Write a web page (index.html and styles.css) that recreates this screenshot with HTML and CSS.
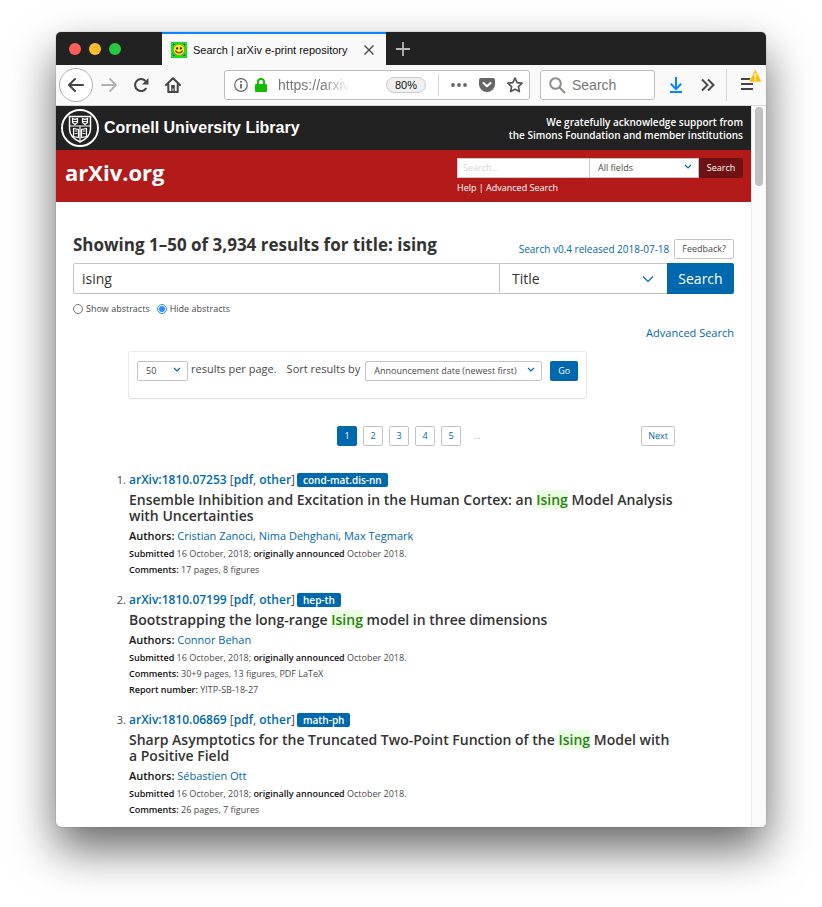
FILE: index.html
```
<!DOCTYPE html>
<html lang="en">
<head>
<meta charset="utf-8">
<title>Search | arXiv e-print repository</title>
<link rel="stylesheet" href="styles.css">
</head>
<body>
<div class="window">
  <div class="tabbar">
    <div class="lights"><span class="light close"></span><span class="light minimize"></span><span class="light expand"></span></div>
    <div class="tab">
      <svg class="favicon" viewBox="0 0 16 16" aria-hidden="true"><path fill="#0be81a" d="M0 0h16v16H0z"/><path stroke="#264b32" stroke-width="1.6" d="M1 1l14 14M15 1L1 15"/><path stroke="#b7c9b4" stroke-width="1.2" stroke-dasharray="1.5 1.5" d="M1 1l14 14M15 1L1 15"/><circle cx="8" cy="7.8" r="5.6" fill="#ffe51f" stroke="#a58a12" stroke-width=".7"/><ellipse cx="6.2" cy="6.2" rx=".8" ry="1.2"/><ellipse cx="9.8" cy="6.2" rx=".8" ry="1.2"/><path fill="none" stroke="#51370b" stroke-width="1.1" d="M4.3 8.7q3.7 4.6 7.4 0"/></svg>
      <span class="tab-title">Search | arXiv e-print repository</span>
      <button class="bare" type="button" aria-label="Close tab"><svg width="12" height="12" viewBox="0 0 12 12" fill="none" stroke="#4a4a4a" stroke-width="1.4"><path d="M1.5 1.5l9 9M10.5 1.5l-9 9"/></svg></button>
    </div>
    <button class="bare new-tab" type="button" aria-label="New tab"><svg width="14" height="14" viewBox="0 0 14 14" stroke="#b9b9b9" stroke-width="1.8"><path d="M7 0v14M0 7h14"/></svg></button>
  </div>

  <div class="toolbar">
    <button class="bare back" type="button" aria-label="Back"><svg width="16" height="16" viewBox="0 0 16 16" fill="none" stroke="#454545" stroke-width="2" stroke-linecap="round" stroke-linejoin="round"><path d="M15 8H1.5M7 2L1 8l6 6"/></svg></button>
    <button class="bare nav-icon" type="button" aria-label="Forward"><svg width="16" height="16" viewBox="0 0 16 16" fill="none" stroke="#b3b3b3" stroke-width="1.8" stroke-linecap="round" stroke-linejoin="round"><path d="M1 8h13.5M9 2l6 6-6 6"/></svg></button>
    <button class="bare nav-icon" type="button" aria-label="Reload"><svg width="16" height="16" viewBox="0 0 16 16" fill="none" stroke="#454545" stroke-width="2.1"><path d="M13.3 11A6 6 0 1 1 12.5 4"/><path fill="#454545" stroke="none" d="M15.5 1v6.5H9z"/></svg></button>
    <button class="bare nav-icon" type="button" aria-label="Home"><svg width="16" height="16" viewBox="0 0 16 16" fill="none" stroke="#454545" stroke-width="2" stroke-linejoin="round" stroke-linecap="round"><path d="M1 8l7-6.8L15 8M3.3 7.5V15h9.4V7.5"/><path fill="#454545" stroke="none" d="M6.2 8h3.6v6.5H8.5v-3h-1v3H6.2z"/></svg></button>
    <div class="urlbar">
      <svg width="14" height="14" viewBox="0 0 14 14" fill="none" stroke="#666" stroke-width="1.2"><circle cx="7" cy="7" r="6.3"/><path stroke-width="1.8" d="M7 6v4.5M7 3v1.8"/></svg>
      <svg width="12" height="14" viewBox="0 0 12 14"><path fill="#12bc00" d="M1 6h10a1 1 0 0 1 1 1v6a1 1 0 0 1-1 1H1a1 1 0 0 1-1-1V7a1 1 0 0 1 1-1z"/><path fill="none" stroke="#12bc00" stroke-width="2" d="M3 7V4a3 3 0 0 1 6 0v3"/></svg>
      <input class="url" type="text" aria-label="Address" value="https://arxiv.org">
      <button class="zoom-level" type="button">80%</button>
      <span class="url-divider"></span>
      <button class="bare" type="button" aria-label="Page actions"><svg width="16" height="16" viewBox="0 0 16 16" fill="#666"><circle cx="2" cy="8" r="1.9"/><circle cx="8" cy="8" r="1.9"/><circle cx="14" cy="8" r="1.9"/></svg></button>
      <button class="bare" type="button" aria-label="Save to Pocket"><svg width="16" height="16" viewBox="0 0 16 16"><path fill="#666" d="M2 1h12a2 2 0 0 1 2 2v4.500a8 7.500 0 0 1-16 0V3a2 2 0 0 1 2-2z"/><path fill="none" stroke="#fff" stroke-width="2" stroke-linecap="round" stroke-linejoin="round" d="M4.500 6L8 9.300 11.500 6"/></svg></button>
      <button class="bare" type="button" aria-label="Bookmark"><svg width="16" height="16" viewBox="0 0 16 16" fill="none" stroke="#555" stroke-width="1.7" stroke-linejoin="round"><path d="M8 1l2.100 4.600 5 .6-3.700 3.400 1 5L8 12.200l-4.400 2.400 1-5L.9 6.200l5-.6z"/></svg></button>
    </div>
    <div class="searchbar">
      <svg width="17" height="17" viewBox="0 0 17 17" fill="none" stroke="#8c8c8c" stroke-width="2"><circle cx="6.5" cy="6.5" r="5.3"/><path d="M10.5 10.5l5.5 5.5"/></svg>
      <input type="text" aria-label="Web search" placeholder="Search">
    </div>
    <div class="tools">
      <button class="bare" type="button" aria-label="Downloads"><svg width="14" height="16" viewBox="0 0 14 16" fill="none" stroke="#0a84ff" stroke-width="2"><path d="M7 0v11.500M1.800 6.800L7 12l5.200-5.200M1 15h12"/></svg></button>
      <button class="bare" type="button" aria-label="More tools"><svg width="14" height="14" viewBox="0 0 14 14" fill="none" stroke="#4a4a4a" stroke-width="2"><path d="M1 1.500L6.500 7 1 12.500M7 1.500L12.500 7 7 12.500"/></svg></button>
    </div>
    <button class="bare menu" type="button" aria-label="Menu"><svg width="22" height="24" viewBox="0 0 22 24"><path stroke="#454545" stroke-width="2" d="M1 10h12M1 15h12M1 20h12"/><path fill="#ffbf00" stroke="#f9f9fa" stroke-width=".6" stroke-linejoin="round" d="M14.500 1.500q.8-1.200 1.600 0l5 10q.5 1.500-1 1.500h-9.500q-1.500 0-1-1.500z"/><path stroke="#fff" stroke-width="1.700" d="M15.300 4.500v4M15.300 9.800v1.600"/></svg></button>
  </div>

  <div class="viewport">
    <div class="page">
      <header>
        <div class="cornell">
          <a class="brand" href="#">
            <svg width="38" height="38" viewBox="0 0 38 38" fill="none" stroke="#fff"><circle cx="19" cy="19" r="18" stroke-width="1.9"/><path stroke-width="1.5" d="M8.500 7.500h21V20q0 8-10.500 13Q8.500 28 8.500 20z"/><path stroke-width="1.2" d="M8.500 17h21M11.500 9.500v4l2.500 2 2.500-2v-4l-2.500 1zM21.500 9.500v4l2.500 2 2.500-2v-4l-2.500 1zM19 17v15M12.500 19.500l5 1v8l-5-1zM25.500 19.500l-5 1v8l5-1z"/><path stroke-width=".9" d="M13.500 22h3M13.500 24.500h3M21.500 22h3M21.500 24.500h3M12 12.500h4M22 12.500h4"/></svg>
            <span>Cornell University Library</span>
          </a>
          <p class="support">We gratefully acknowledge support from<br>the Simons Foundation and member institutions</p>
        </div>
        <div class="identity">
          <a class="site-name" href="#">arXiv.org</a>
          <form class="mini-search">
            <div class="mini-row">
              <input type="text" aria-label="Search terms" placeholder="Search...">
              <span class="select mini-select"><select aria-label="Field to search"><option>All fields</option></select><svg width="8" height="6" viewBox="0 0 8 6"><path d="M1 1l3 3 3-3"/></svg></span>
              <button type="button">Search</button>
            </div>
            <p class="mini-links"><a href="#">Help</a> | <a href="#">Advanced Search</a></p>
          </form>
        </div>
      </header>

      <main>
        <div class="heading">
          <h1>Showing 1–50 of 3,934 results for title: ising</h1>
          <div class="release"><a href="#">Search v0.4 released 2018-07-18</a><button class="outline" type="button">Feedback?</button></div>
        </div>
        <form>
          <div class="search-row">
            <input type="text" aria-label="Search term" value="ising">
            <span class="select field-select"><select aria-label="Search field"><option>Title</option></select><svg width="12" height="8" viewBox="0 0 12 8"><path d="M1 1.500l5 5 5-5"/></svg></span>
            <button type="button">Search</button>
          </div>
          <div class="radios">
            <label><input type="radio" name="abstracts">Show abstracts</label>
            <label><input type="radio" name="abstracts" checked>Hide abstracts</label>
          </div>
          <p class="advanced"><a href="#">Advanced Search</a></p>
        </form>

        <div class="results">
          <form class="sorting">
            <span class="select size-select"><select id="size"><option>50</option></select><svg width="8" height="6" viewBox="0 0 8 6"><path d="M1 1l3 3 3-3"/></svg></span>
            <label class="per-page" for="size">results per page.</label>
            <label class="sort-by" for="order">Sort results by</label>
            <span class="select order-select"><select id="order"><option>Announcement date (newest first)</option></select><svg width="8" height="6" viewBox="0 0 8 6"><path d="M1 1l3 3 3-3"/></svg></span>
            <button class="go" type="button">Go</button>
          </form>

          <nav class="pagination" aria-label="Pagination">
            <ul>
              <li><a class="current" href="#">1</a></li>
              <li><a href="#">2</a></li>
              <li><a href="#">3</a></li>
              <li><a href="#">4</a></li>
              <li><a href="#">5</a></li>
              <li><span class="ellipsis">…</span></li>
            </ul>
            <a class="next" href="#">Next</a>
          </nav>

          <ol>
            <li>
              <div class="ident"><span class="num">1.</span><span class="ids"><a href="#">arXiv:1810.07253</a> [<a href="#">pdf</a>, <a href="#">other</a>]</span><span class="tag">cond-mat.dis-nn</span></div>
              <h2>Ensemble Inhibition and Excitation in the Human Cortex: an <mark>Ising</mark> Model Analysis with Uncertainties</h2>
              <p class="authors"><b>Authors:</b> <a href="#">Cristian Zanoci</a>, <a href="#">Nima Dehghani</a>, <a href="#">Max Tegmark</a></p>
              <p class="meta"><b>Submitted</b> 16 October, 2018; <b>originally announced</b> October 2018.</p>
              <p class="meta"><b>Comments:</b> 17 pages, 8 figures</p>
            </li>
            <li>
              <div class="ident"><span class="num">2.</span><span class="ids"><a href="#">arXiv:1810.07199</a> [<a href="#">pdf</a>, <a href="#">other</a>]</span><span class="tag">hep-th</span></div>
              <h2>Bootstrapping the long-range <mark>Ising</mark> model in three dimensions</h2>
              <p class="authors"><b>Authors:</b> <a href="#">Connor Behan</a></p>
              <p class="meta"><b>Submitted</b> 16 October, 2018; <b>originally announced</b> October 2018.</p>
              <p class="meta"><b>Comments:</b> 30+9 pages, 13 figures, PDF LaTeX</p>
              <p class="meta"><b>Report number:</b> YITP-SB-18-27</p>
            </li>
            <li>
              <div class="ident"><span class="num">3.</span><span class="ids"><a href="#">arXiv:1810.06869</a> [<a href="#">pdf</a>, <a href="#">other</a>]</span><span class="tag">math-ph</span></div>
              <h2>Sharp Asymptotics for the Truncated Two-Point Function of the <mark>Ising</mark> Model with a Positive Field</h2>
              <p class="authors"><b>Authors:</b> <a href="#">Sébastien Ott</a></p>
              <p class="meta"><b>Submitted</b> 16 October, 2018; <b>originally announced</b> October 2018.</p>
              <p class="meta"><b>Comments:</b> 26 pages, 7 figures</p>
            </li>
          </ol>
        </div>
      </main>
    </div>
    <div class="scrollbar"><div class="thumb"></div></div>
  </div>
</div>
</body>
</html>
```
FILE: styles.css
```
* { box-sizing: border-box; }

body {
  margin: 0;
  padding: 32px 56px 80px;
  background: #fff;
  color: #4a4a4a;
  font: 11px/16px "Open Sans", sans-serif;
}

h1, h2, p, ul, ol { margin: 0; padding: 0; }
ul, ol { list-style: none; }
a { color: #0068ac; text-decoration: none; }
button, input, select { font: inherit; color: inherit; margin: 0; }
svg { display: block; flex: none; }
.bare { flex: none; padding: 0; border: 0; background: none; }

.window {
  border-radius: 5px;
  overflow: hidden;
  background: #fff;
  box-shadow: 0 0 1px rgba(0, 0, 0, .6), 0 22px 46px rgba(0, 0, 0, .6);
}

/* Browser chrome */
.tabbar {
  display: flex;
  height: 33px;
  background: #222;
  font: 11px/16px "Liberation Sans", sans-serif;
}
.lights { display: flex; align-items: center; gap: 8px; width: 106px; padding-left: 13px; }
.light { width: 12px; height: 12px; border-radius: 50%; }
.close { background: #ff5f57; }
.minimize { background: #ffbd2e; }
.expand { background: #28c840; }
.tab {
  display: flex;
  align-items: center;
  width: 224px;
  padding: 0 11px 0 9px;
  border-top: 2px solid #0a84ff;
  background: #f9f9fa;
  color: #0c0c0d;
}
.favicon { width: 16px; height: 16px; }
.tab-title { flex: 1; margin-left: 6px; white-space: nowrap; }
.new-tab { margin-left: 10px; }

.toolbar {
  display: flex;
  align-items: center;
  height: 41px;
  padding: 0 4px 0 3px;
  border-bottom: 1px solid #d8d8d8;
  background: #f9f9fa;
  font: 14px/20px "Liberation Sans", sans-serif;
}
.back {
  display: grid;
  place-items: center;
  width: 34px;
  height: 34px;
  margin-right: 8px;
  border: 1px solid #b1b1b1;
  border-radius: 50%;
  background: #fff;
}
.nav-icon { margin-right: 16px; }
.urlbar, .searchbar {
  display: flex;
  align-items: center;
  height: 30px;
  border: 1px solid #bdbdbd;
  border-radius: 3px;
  background: #fff;
}
.urlbar { flex: 1; gap: 7px; min-width: 0; margin-left: 27px; padding: 0 6px 0 9px; }
.url {
  flex: 1;
  min-width: 0;
  margin-left: 4px;
  padding: 0;
  border: 0;
  background: none;
  color: #777;
  -webkit-mask-image: linear-gradient(90deg, #000 44px, transparent 72px);
  mask-image: linear-gradient(90deg, #000 44px, transparent 72px);
}
.zoom-level {
  height: 16px;
  padding: 0 8px;
  border: 1px solid #ccc;
  border-radius: 8px;
  background: #f0f0f0;
  color: #0c0c0d;
  font-size: 11px;
  line-height: 14px;
}
.url-divider { width: 1px; height: 22px; margin: 0 5px; background: #d7d7db; }
.urlbar .bare + .bare { margin-left: 5px; }
.searchbar { flex: none; width: 115px; margin-left: 10px; padding: 0 8px; gap: 6px; }
.searchbar input { width: 100%; min-width: 0; padding: 0; border: 0; background: none; }
.searchbar input::placeholder { color: #777; opacity: 1; }
.tools { display: flex; align-items: center; gap: 18px; margin-left: 14px; }
.menu { margin-left: 11px; padding: 0 0 8px 13px; border-left: 1px solid #d7d7db; }

.viewport { display: flex; }
.page { flex: 1; min-width: 0; }
.scrollbar { width: 15px; padding: 1px 3px; border-left: 1px solid #e8e8e8; background: #fafafa; }
.thumb { width: 8px; height: 79px; border-radius: 4px; background: #c1c1c1; }

/* Site header */
header { color: #fff; }
header a { color: inherit; }
.cornell {
  display: flex;
  align-items: center;
  justify-content: space-between;
  height: 44px;
  padding: 0 8px 0 5px;
  background: #222;
}
.brand { display: flex; align-items: center; gap: 5px; font: bold 16px/20px "Liberation Sans", sans-serif; }
.support { padding-top: 2px; font-size: 10px; font-weight: 600; line-height: 13px; text-align: right; }
.identity {
  display: flex;
  justify-content: space-between;
  height: 52px;
  padding: 8px 8px 0 9px;
  background: #b31b1b;
}
.site-name { font-size: 22px; font-weight: 700; line-height: 28px; }
.mini-search { font-size: 9px; line-height: 14px; }
.mini-row { display: flex; height: 20px; }
.mini-row input { width: 133px; padding: 0 5px; border: 1px solid #ccc; background: #fff; }
.mini-row input::placeholder { color: #d5d5d5; opacity: 1; }
.mini-row button { width: 44px; padding: 0; border: 0; border-radius: 0 2px 2px 0; background: #701113; }
.mini-select { width: 109px; color: #4a4a4a; }
.mini-links { margin-top: 3px; }

/* Controls */
.select { display: flex; position: relative; }
.select select {
  appearance: none;
  width: 100%;
  padding: 0 8px;
  border: 1px solid #c4c4c4;
  border-radius: 2px;
  background: #fff;
}
.select svg {
  position: absolute;
  top: 50%;
  right: 7px;
  margin-top: -4px;
  fill: none;
  stroke: #0068ac;
  stroke-width: 1.2;
  pointer-events: none;
}
.mini-select select { border-left: 0; border-radius: 0; }

main { padding: 35px 17px 9px; }
.heading { display: flex; justify-content: space-between; height: 26px; }
h1 { color: #333; font-size: 17px; font-weight: 700; line-height: 16px; }
.release { display: flex; align-items: center; gap: 5px; height: 20px; margin-top: 2px; font-size: 10px; }
.outline { height: 20px; padding: 0 7px; border: 1px solid #c4c4c4; border-radius: 2px; background: #fff; font-size: 9px; }
.search-row { display: flex; height: 31px; font-size: 14px; line-height: 20px; color: #333; }
.search-row input { flex: 1; min-width: 0; padding: 0 8px; border: 1px solid #c4c4c4; border-radius: 2px 0 0 2px; }
.search-row button { width: 67px; padding: 0; border: 0; border-radius: 0 2px 2px 0; background: #0068ac; color: #fff; }
.field-select { width: 167px; }
.field-select select { padding: 0 12px; border-left: 0; border-right: 0; border-radius: 0; }
.field-select svg { right: 13px; }
.radios { display: flex; gap: 7px; height: 16px; margin-top: 7px; font-size: 9px; }
.radios label { display: flex; align-items: center; gap: 3px; }
.radios input { width: 10px; height: 10px; accent-color: #2d8cff; }
.advanced { margin-top: 8px; text-align: right; }

.results { margin: 11px 59px 0 56px; }
.sorting {
  display: flex;
  width: fit-content;
  height: 46px;
  padding: 9px 8px;
  border-radius: 2px;
  box-shadow: 0 1px 2px rgba(10, 10, 10, .08), 0 0 0 1px rgba(10, 10, 10, .08);
}
.sorting .select { height: 20px; font-size: 9px; }
.size-select { width: 51px; }
.order-select { width: 177px; }
.per-page { margin: 0 10px 0 3px; }
.sort-by { margin-right: 5px; }
.go { width: 28px; height: 20px; margin-left: 8px; padding: 0; border: 0; border-radius: 2px; background: #0068ac; color: #fff; font-size: 9px; }

.pagination { display: grid; grid-template-columns: 1fr auto 1fr; margin: 28px 0 24px 20px; font-size: 9px; line-height: 18px; }
.pagination ul { grid-column: 2; display: flex; gap: 6px; }
.pagination a { display: block; min-width: 20px; border: 1px solid #c4c4c4; border-radius: 2px; text-align: center; }
.pagination .current { border-color: #0068ac; background: #0068ac; color: #fff; }
.ellipsis { display: block; width: 20px; color: #b5b5b5; text-align: center; line-height: 20px; }
.pagination .next { justify-self: end; padding: 0 6px; }

/* Result list */
ol li + li { margin-top: 12px; }
.ident { display: flex; align-items: center; height: 20px; margin-left: -24px; }
.num { width: 21px; margin-right: 3px; text-align: right; }
.ids { font-size: 12px; }
.ids a { font-weight: 600; }
.tag { margin-left: 2px; padding: 0 6px; border-radius: 2px; background: #0068ac; color: #fff; font-size: 10px; font-weight: 600; line-height: 14px; }
h2 { margin-top: 2px; color: #333; font-size: 14px; font-weight: 600; line-height: 16px; }
mark { background: #eaffe2; color: #2b8014; }
.authors { margin: 4px 0 2px; }
.meta { font-size: 9px; }
b { color: #111; font-weight: 600; }
```
